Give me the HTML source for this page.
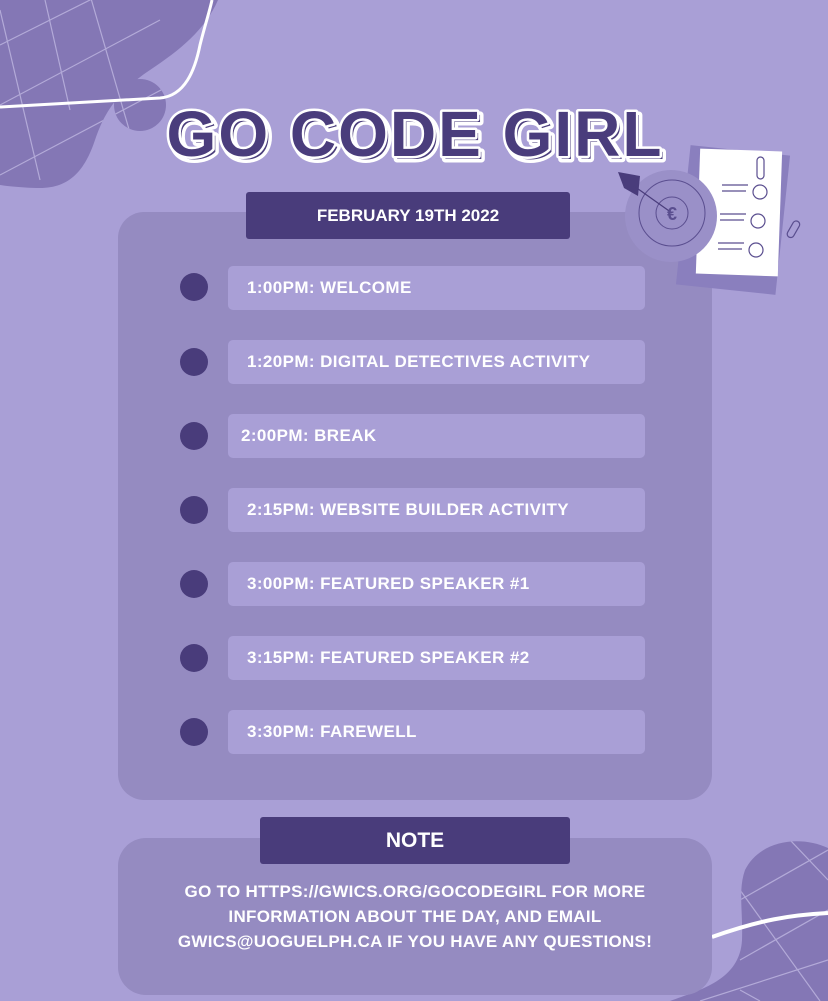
<!DOCTYPE html>
<html><head><meta charset="utf-8"><style>
*{margin:0;padding:0;box-sizing:border-box}
body{width:828px;height:1001px;background:#a99fd6;position:relative;overflow:hidden;font-family:"Liberation Sans",sans-serif;font-weight:bold;color:#fff}
.abs{position:absolute}
.card{left:118px;top:212px;width:594px;height:588px;background:#958bc1;border-radius:26px}
.note{left:118px;top:838px;width:594px;height:157px;background:#958bc1;border-radius:28px}
.ban{background:#493c7b;border-radius:3px;display:flex;align-items:center;justify-content:center}
.item{left:228px;width:417px;height:44px;background:#a99fd6;border-radius:5px;padding-left:19px;font-size:17px;line-height:44px;letter-spacing:0.4px}
.dot{left:180px;width:28px;height:28px;border-radius:50%;background:#493c7b}
</style></head><body>
<svg class="abs" style="left:0;top:0" width="828" height="1001">
 <defs>
 <clipPath id="b1"><path d="M0 0 H218 C205 30 180 50 150 70 C120 90 105 110 95 140 C85 170 70 188 40 188 C20 188 0 185 0 185 Z"/><circle cx="140" cy="105" r="26"/></clipPath>
 <clipPath id="b2"><path d="M745 870 C760 840 800 835 828 848 V1001 H670 C700 990 740 980 742 940 C743 910 738 890 745 870 Z"/></clipPath>
 </defs>
 <g clip-path="url(#b1)"><rect width="230" height="200" fill="#8477b5"/>
  <g stroke="#b3aad8" stroke-width="1.2" fill="none">
  <path d="M0 45 L100 -5 M0 105 L160 20 M0 175 L180 80"/>
  <path d="M0 10 L40 180 M45 0 L70 110 M90 -5 L135 150"/>
  </g></g>
 <path d="M0 107 C60 104 120 100 160 98 C185 96 195 70 200 45 C205 25 210 10 212 0" stroke="#fff" stroke-width="3" fill="none"/>
 <g clip-path="url(#b2)"><rect x="660" y="830" width="170" height="180" fill="#8477b5"/>
  <g stroke="#b3aad8" stroke-width="1.2" fill="none"><path d="M740 900 L828 850 M740 960 L828 910 M700 1001 L828 960 M790 840 L828 880 M740 890 L820 1001 M740 990 L760 1001"/></g></g>
 <path d="M712 937 C760 920 790 915 828 913" stroke="#fff" stroke-width="4" fill="none"/>
 <text x="415" y="156" text-anchor="middle" font-family="Liberation Sans" font-weight="bold" font-size="64" letter-spacing="2" fill="#4a3d7c" stroke="#fff" stroke-width="7" stroke-linejoin="round" paint-order="stroke" transform="translate(3,3)">GO CODE GIRL</text>
 <text x="415" y="156" text-anchor="middle" font-family="Liberation Sans" font-weight="bold" font-size="64" letter-spacing="2" fill="#4a3d7c" stroke="#fff" stroke-width="5" stroke-linejoin="round" paint-order="stroke">GO CODE GIRL</text>
</svg>
<div class="abs card"></div>
<svg class="abs" style="left:0;top:0" width="828" height="320">
  <rect x="683" y="150" width="100" height="140" fill="#8a7fbe" transform="rotate(6 733 220)"/>
  <rect x="698" y="150" width="82" height="125" fill="#fff" transform="rotate(2 739 212)"/>
  <circle cx="671" cy="216" r="46" fill="#9a90c8"/>
  <circle cx="672" cy="213" r="33" fill="none" stroke="#5a4e8f" stroke-width="1"/>
  <circle cx="672" cy="213" r="16" fill="none" stroke="#5a4e8f" stroke-width="1"/>
  <path d="M618 172 L640 176 L638 196 L624 188Z" fill="#493c7b"/>
  <path d="M634 186 L672 213" stroke="#493c7b" stroke-width="1.2"/>
  <text x="672" y="220" text-anchor="middle" font-size="18" fill="#5a4e8f" font-family="Liberation Sans">&#8364;</text>
  <g stroke="#5a4e8f" stroke-width="1.2" fill="none">
  <path d="M722 185 H748 M722 191 H746 M720 214 H746 M720 220 H744 M718 243 H744 M718 249 H742"/>
  <circle cx="760" cy="192" r="7"/><circle cx="758" cy="221" r="7"/><circle cx="756" cy="250" r="7"/>
  <rect x="757" y="157" width="7" height="22" rx="3.5"/>
  <rect x="790" y="220" width="7" height="18" rx="3.5" transform="rotate(30 793 229)"/>
  </g>
</svg>
<div class="abs ban" style="left:246px;top:192px;width:324px;height:47px;font-size:17px;letter-spacing:0">FEBRUARY 19TH 2022</div>
<div class="abs dot" style="top:273px"></div><div class="abs item" style="top:266px">1:00PM: WELCOME</div>
<div class="abs dot" style="top:348px"></div><div class="abs item" style="top:340px">1:20PM: DIGITAL DETECTIVES ACTIVITY</div>
<div class="abs dot" style="top:422px"></div><div class="abs item" style="top:414px;padding-left:13px">2:00PM: BREAK</div>
<div class="abs dot" style="top:496px"></div><div class="abs item" style="top:488px">2:15PM: WEBSITE BUILDER ACTIVITY</div>
<div class="abs dot" style="top:570px"></div><div class="abs item" style="top:562px">3:00PM: FEATURED SPEAKER #1</div>
<div class="abs dot" style="top:644px"></div><div class="abs item" style="top:636px">3:15PM: FEATURED SPEAKER #2</div>
<div class="abs dot" style="top:718px"></div><div class="abs item" style="top:710px">3:30PM: FAREWELL</div>
<div class="abs note"></div>
<div class="abs ban" style="left:260px;top:817px;width:310px;height:47px;font-size:21px">NOTE</div>
<div class="abs" style="left:98px;top:879px;width:634px;text-align:center;font-size:17px;line-height:25px;letter-spacing:0.3px">GO TO HTTPS://GWICS.ORG/GOCODEGIRL FOR MORE<br>INFORMATION ABOUT THE DAY, AND EMAIL<br>GWICS@UOGUELPH.CA IF YOU HAVE ANY QUESTIONS!</div>
</body></html>
